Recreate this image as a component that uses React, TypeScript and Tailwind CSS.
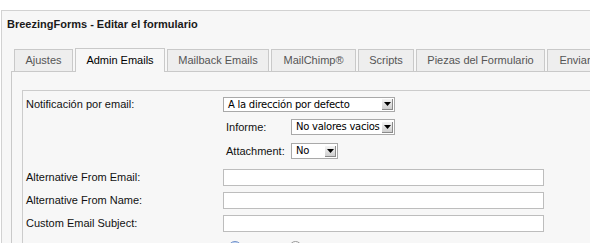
import React from 'react';

const tabs = [
  { label: 'Ajustes', w: 'w-[59px]' },
  { label: 'Admin Emails', w: 'w-[90px]', active: true },
  { label: 'Mailback Emails', w: 'w-[102px]' },
  { label: 'MailChimp®', w: 'w-[85px]' },
  { label: 'Scripts', w: 'w-[56px]' },
  { label: 'Piezas del Formulario', w: 'w-[129px]' },
  { label: 'Enviar', w: 'w-[56px]' },
];

// Old aqua style dropdown with the little arrow button on the right
function Select({ value, width }: { value: string; width: string }) {
  return (
    <div
      className={`${width} bg-white border border-[#a9a9a9] flex items-center justify-between pl-[4px] pr-[1px] shrink-0`}
    >
      <span className="text-[10px] leading-none text-black font-['DejaVu_Sans',sans-serif] tracking-[-0.25px] whitespace-nowrap">
        {value}
      </span>
      <span className="w-[11px] h-[11px] bg-gradient-to-b from-[#f4f4f4] to-[#cfcfcf] border-r border-b border-[#8a8a8a] flex items-center justify-center">
        <svg width="7" height="4" viewBox="0 0 7 4">
          <polygon points="0,0 7,0 3.5,4" fill="#000" />
        </svg>
      </span>
    </div>
  );
}

function TextRow({ label }: { label: string }) {
  return (
    <div className="flex items-center h-[17px]">
      <div className="w-[200px] pl-[3px] text-[11px] text-[#111]">{label}</div>
      <div className="w-[321px] h-[17px] bg-white border border-[#bdbdbd]" />
    </div>
  );
}

export default function App() {
  return (
    <div className="w-[590px] h-[243px] overflow-hidden bg-white font-['Liberation_Sans',Arial,sans-serif]">
      <div className="mt-[10px] ml-[1px] h-[233px] border-l border-t border-[#d2d2d2] bg-[#f7f7f7]">
        <h1 className="h-[27px] flex items-center pl-[5px] text-[11px] font-bold text-[#1a1a1a]">
          BreezingForms - Editar el formulario
        </h1>

        <div className="mt-[10px] ml-[9px]">
          <div className="flex items-end gap-[2px] pl-[3px] h-[24px] relative z-10">
            {tabs.map((t) => (
              <div
                key={t.label}
                className={`${t.w} shrink-0 flex items-center justify-center border border-[#c9c9c9] text-[11px] whitespace-nowrap ${
                  t.active
                    ? 'h-[24px] border-b-0 bg-[#f7f7f7] text-black'
                    : 'h-[23px] bg-[#eeeeee] text-[#555]'
                }`}
              >
                {t.label}
              </div>
            ))}
          </div>

          <div className="-mt-[1px] border-l border-t border-[#c9c9c9] pl-[10px] pt-[18px] h-[200px]">
            <div className="border-l border-t border-[#cccccc] h-[200px] pt-[6px]">
              <div className="flex items-center h-[15px]">
                <div className="w-[200px] pl-[3px] text-[11px] text-[#111]">Notificación por email:</div>
                <Select value="A la dirección por defecto" width="w-[172px] h-[15px]" />
              </div>

              <div className="ml-[203px] mt-[7px] flex flex-col gap-[8px]">
                <div className="flex items-center h-[16px]">
                  <div className="w-[65px] text-[11px] text-[#111]">Informe:</div>
                  <Select value="No valores vacios" width="w-[104px] h-[16px]" />
                </div>
                <div className="flex items-center h-[16px]">
                  <div className="w-[65px] text-[11px] text-[#111]">Attachment:</div>
                  <Select value="No" width="w-[47px] h-[16px]" />
                </div>
              </div>

              <div className="mt-[10px] flex flex-col gap-[6px]">
                <TextRow label="Alternative From Email:" />
                <TextRow label="Alternative From Name:" />
                <TextRow label="Custom Email Subject:" />
                <div className="flex items-start h-[17px]">
                  <div className="w-[205px] pl-[3px] pt-[3px] text-[11px] text-[#111]">Edit Emails:</div>
                  <span className="mt-[3px] w-[14px] h-[14px] rounded-full border border-[#6f8fc9] bg-gradient-to-b from-[#c8daf5] to-[#7aa4e3]" />
                  <span className="mt-[3px] ml-[47px] w-[13px] h-[13px] rounded-full border border-[#9a9a9a] bg-gradient-to-b from-white to-[#e4e4e4]" />
                </div>
              </div>
            </div>
          </div>
        </div>
      </div>
    </div>
  );
}
